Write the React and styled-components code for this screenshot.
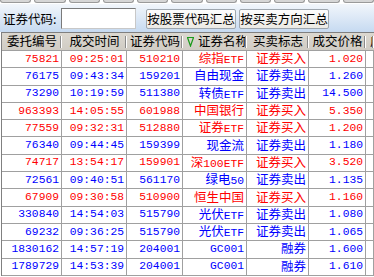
import React from "react";
import styled, { createGlobalStyle } from "styled-components";

const Global = createGlobalStyle`
  *, *::before, *::after { box-sizing: border-box; }
  html, body { margin: 0; padding: 0; background: #ffffff; }
  body { width: 374px; height: 277px; overflow: hidden; font-family: "Liberation Mono", "Noto Sans CJK SC", monospace; }
`;

const Page = styled.div`
  width: 374px;
  height: 277px;
  overflow: hidden;
  display: flex;
  flex-direction: column;
  background: #ffffff;
`;

const TabStrip = styled.div`
  height: 4px;
  flex: none;
  display: flex;
  gap: 3px;
  background: #ffffff;
`;

const Tab = styled.div`
  width: 34px;
  height: 3px;
  background: #d6d6d6;
  border: 1px solid #9a9a9a;
  border-top: none;
  border-radius: 0 0 3px 3px;
`;

const Toolbar = styled.div`
  height: 28px;
  flex: none;
  display: flex;
  align-items: center;
  padding-left: 3px;
  padding-top: 1px;
  background: linear-gradient(#f2f6fb, #c6daf1);
`;

const Label = styled.span`
  font-family: "Noto Sans CJK SC", sans-serif;
  font-size: 12.5px;
  color: #000;
  width: 58px;
`;

const Input = styled.div`
  width: 75px;
  height: 21px;
  background: #fff;
  border: 1px solid #7a7a7a;
  border-right-color: #c8c8c8;
  border-bottom-color: #c8c8c8;
  margin-right: 10px;
`;

const Button = styled.div`
  width: 90px;
  height: 20px;
  margin-right: 3px;
  display: flex;
  align-items: center;
  justify-content: center;
  background: linear-gradient(#fdfdfd, #eceae4);
  border: 1px solid #9ea6ae;
  border-radius: 2px;
  font-family: "Noto Sans CJK SC", sans-serif;
  font-size: 12.5px;
  color: #000;
`;

const Grid = styled.div`
  display: grid;
  grid-template-columns: 60px 65px 56px 64px 62px 57px 1fr;
  grid-template-rows: 19px repeat(13, 17.31px);
  border-left: 1px solid #808080;
  margin-left: 1px;
`;

const HeadCell = styled.div`
  position: relative;
  display: flex;
  align-items: center;
  justify-content: ${(p) => (p.$left ? "flex-start" : "center")};
  padding-left: ${(p) => (p.$left ? "4px" : "0")};
  background: linear-gradient(#dcd8d0, #d0ccc4);
  border-top: 1px solid #808080;
  border-bottom: 1px solid #a0a0a0;
  font-family: "Noto Sans CJK SC", sans-serif;
  font-size: 12.5px;
  line-height: 1;
  color: #000;
  white-space: nowrap;
  overflow: hidden;
  &::after {
    content: "";
    position: absolute;
    right: 0;
    top: 3px;
    width: 2px;
    height: 12px;
    background: #8a8a8a;
    border-right: 1px solid #ffffff;
  }
`;

const SortMark = styled.svg`
  width: 7px;
  height: 11px;
  margin-right: 4px;
  flex: none;
`;

const Cell = styled.div`
  display: flex;
  align-items: center;
  justify-content: flex-end;
  padding-right: 2px;
  border-right: 1px solid #a0a0a0;
  border-bottom: 1px solid #a0a0a0;
  background: #ffffff;
  color: ${(p) => (p.$buy ? "#ff0000" : "#0000ff")};
  white-space: nowrap;
  overflow: hidden;
`;

const Txt = styled.span`
  font-family: "Liberation Mono", "Noto Sans CJK SC", monospace;
  font-size: 11.3px;
  line-height: 13px;
`;

const Han = styled.span`
  font-family: "Noto Sans CJK SC", sans-serif;
  font-size: 12.5px;
`;

const rows = [
  ["75821", "09:25:01", "510210", "综指ETF", "证券买入", "1.020", true],
  ["76175", "09:43:34", "159201", "自由现金", "证券卖出", "1.260", false],
  ["73290", "10:19:59", "511380", "转债ETF", "证券卖出", "14.500", false],
  ["963393", "14:05:55", "601988", "中国银行", "证券买入", "5.350", true],
  ["77559", "09:32:31", "512880", "证券ETF", "证券买入", "1.200", true],
  ["76340", "09:44:45", "159399", "现金流", "证券卖出", "1.180", false],
  ["74717", "13:54:17", "159901", "深100ETF", "证券买入", "3.520", true],
  ["72561", "09:40:51", "561170", "绿电50", "证券卖出", "1.135", false],
  ["67909", "09:30:58", "510900", "恒生中国", "证券买入", "1.160", true],
  ["330840", "14:54:03", "515790", "光伏ETF", "证券卖出", "1.080", false],
  ["69232", "09:36:25", "515790", "光伏ETF", "证券卖出", "1.065", false],
  ["1830162", "14:57:19", "204001", "GC001", "融券", "1.600", false],
  ["1789729", "14:53:39", "204001", "GC001", "融券", "1.610", false],
];

const mixed = (s) => (
  <Txt>
    {s
      .split(/([\u4e00-\u9fff]+)/)
      .filter(Boolean)
      .map((p, i) => (/[\u4e00-\u9fff]/.test(p) ? <Han key={i}>{p}</Han> : p))}
  </Txt>
);

export default function App() {
  return (
    <Page>
      <Global />
      <TabStrip>
        {Array.from({ length: 11 }).map((_, i) => (
          <Tab key={i} />
        ))}
      </TabStrip>
      <Toolbar>
        <Label>证券代码:</Label>
        <Input />
        <Button>按股票代码汇总</Button>
        <Button>按买卖方向汇总</Button>
      </Toolbar>
      <Grid>
        <HeadCell>委托编号</HeadCell>
        <HeadCell>成交时间</HeadCell>
        <HeadCell>证券代码</HeadCell>
        <HeadCell $left>
          <SortMark viewBox="0 0 7 11">
            <path d="M0.5 1.5 L6.5 1.5 L3.5 10 Z" fill="none" stroke="#1a9a1a" strokeWidth="1.2" />
          </SortMark>
          证券名称
        </HeadCell>
        <HeadCell>买卖标志</HeadCell>
        <HeadCell>成交价格</HeadCell>
        <HeadCell $left>成交</HeadCell>
        {rows.map((r, i) => (
          <React.Fragment key={i}>
            {r.slice(0, 6).map((v, j) => (
              <Cell key={j} $buy={r[6]}>
                {mixed(v)}
              </Cell>
            ))}
            <Cell $buy={r[6]} />
          </React.Fragment>
        ))}
      </Grid>
    </Page>
  );
}
